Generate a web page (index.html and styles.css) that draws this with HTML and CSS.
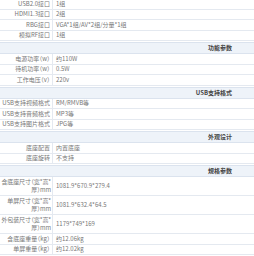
FILE: index.html
```html
<!DOCTYPE html>
<html>
<head>
<meta charset="utf-8">
<link rel="stylesheet" href="styles.css">
</head>
<body>
<div class="spec">
  <div class="row first"><div class="k">USB2.0接口</div><div class="v">1组</div></div>
  <div class="row"><div class="k">HDMI1.3接口</div><div class="v">2组</div></div>
  <div class="row"><div class="k">RBG接口</div><div class="v">VGA*1组/AV*2组/分量*1组</div></div>
  <div class="row"><div class="k">模拟RF接口</div><div class="v">1组</div></div>
  <div class="head">功能参数</div>
  <div class="row"><div class="k">电源功率（w）</div><div class="v">约110W</div></div>
  <div class="row"><div class="k">待机功率（w）</div><div class="v">0.5W</div></div>
  <div class="row"><div class="k">工作电压（v）</div><div class="v">220v</div></div>
  <div class="head">USB支持格式</div>
  <div class="row"><div class="k">USB支持视频格式</div><div class="v">RM/RMVB等</div></div>
  <div class="row"><div class="k">USB支持音频格式</div><div class="v">MP3等</div></div>
  <div class="row"><div class="k">USB支持图片格式</div><div class="v">JPG等</div></div>
  <div class="head">外观设计</div>
  <div class="row"><div class="k">底座配置</div><div class="v">内置底座</div></div>
  <div class="row"><div class="k">底座旋转</div><div class="v">不支持</div></div>
  <div class="head">规格参数</div>
  <div class="row tall"><div class="k">含底座尺寸（宽*高*<br>厚）mm</div><div class="v">1081.9*670.9*279.4</div></div>
  <div class="row tall"><div class="k">单屏尺寸（宽*高*<br>厚）mm</div><div class="v">1081.9*632.4*64.5</div></div>
  <div class="row tall"><div class="k">外包装尺寸（宽*高*<br>厚）mm</div><div class="v">1179*749*169</div></div>
  <div class="row"><div class="k">含底座重量（kg）</div><div class="v">约12.06kg</div></div>
  <div class="row"><div class="k">单屏重量（kg）</div><div class="v">约12.02kg</div></div>
</div>
</body>
</html>
```
FILE: styles.css
```css
html, body {
  margin: 0;
  padding: 0;
  background: #ffffff;
}
body {
  font-family: "Noto Sans CJK SC", "Noto Sans", sans-serif;
  font-size: 6px;
  color: #777777;
  width: 254px;
  overflow: hidden;
}
.spec {
  display: flex;
  flex-direction: column;
  margin-top: -1px;
}
.row {
  display: grid;
  grid-template-columns: 53px 1fr;
  border-bottom: 1px solid #e4e9f0;
  height: 10.5px;
  box-sizing: border-box;
  flex: none;
}
.k {
  border-right: 1px solid #e4e9f0;
  text-align: right;
  padding: 0 2px 0 1px;
  line-height: 8px;
  display: flex;
  align-items: center;
  justify-content: flex-end;
  font-feature-settings: "halt";
}
.v {
  padding: 0 3px;
  line-height: 8px;
  display: flex;
  align-items: center;
}
.tall {
  height: 19px;
}
.tall .k {
  display: block;
  padding: 1px 1px 0 0;
  letter-spacing: -0.1px;
  white-space: nowrap;
}
.head {
  flex: none;
  box-sizing: border-box;
  margin-top: 1px;
  height: 12px;
  line-height: 10px;
  background: #eef3f9;
  border-top: 1px solid #dbe3ee;
  border-bottom: 1px solid #dbe3ee;
  text-align: right;
  padding-right: 22px;
  font-weight: bold;
  color: #444444;
}
```
